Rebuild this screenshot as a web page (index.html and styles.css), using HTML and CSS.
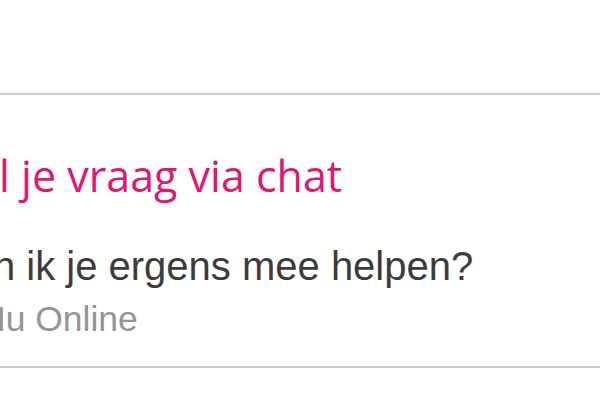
FILE: index.html
```html
<!DOCTYPE html>
<html lang="nl">
<head>
    <meta charset="UTF-8">
    <meta name="viewport" content="width=device-width, initial-scale=1.0">
    <title>Chat</title>
    <link rel="stylesheet" href="styles.css">
</head>
<body>
    <section class="chat-card">
        <h2 class="chat-title">Stel je vraag via chat</h2>
        <div class="chat-body">
            <p class="chat-question">Kan ik je ergens mee helpen?</p>
            <p class="chat-status">Nu Online</p>
        </div>
    </section>
</body>
</html>
```

FILE: styles.css
```css
/* Global Styles */
body {
    margin: 0;
    padding: 0;
    background-color: #ffffff;
    overflow: hidden;
}

/* Chat card */
.chat-card {
    margin-top: 93px;
    border-top: 2px solid #cbcbcb;
    border-bottom: 2px solid #cbcbcb;
    padding: 57px 0 26px 0;
    white-space: nowrap;
}

.chat-title {
    margin: 0 0 0 -64px;
    font-family: "Open Sans", sans-serif;
    font-size: 43px;
    font-weight: normal;
    line-height: 48px;
    color: #dc1a74;
}

.chat-body {
    margin-top: 42px;
}

.chat-question {
    margin: 0 0 0 -56px;
    font-family: "Liberation Sans", Arial, sans-serif;
    font-size: 40px;
    line-height: 48px;
    color: #3c3c3c;
}

.chat-status {
    margin: 8px 0 0 -20px;
    font-family: "Liberation Sans", Arial, sans-serif;
    font-size: 35.5px;
    line-height: 42px;
    color: #959595;
}
```
